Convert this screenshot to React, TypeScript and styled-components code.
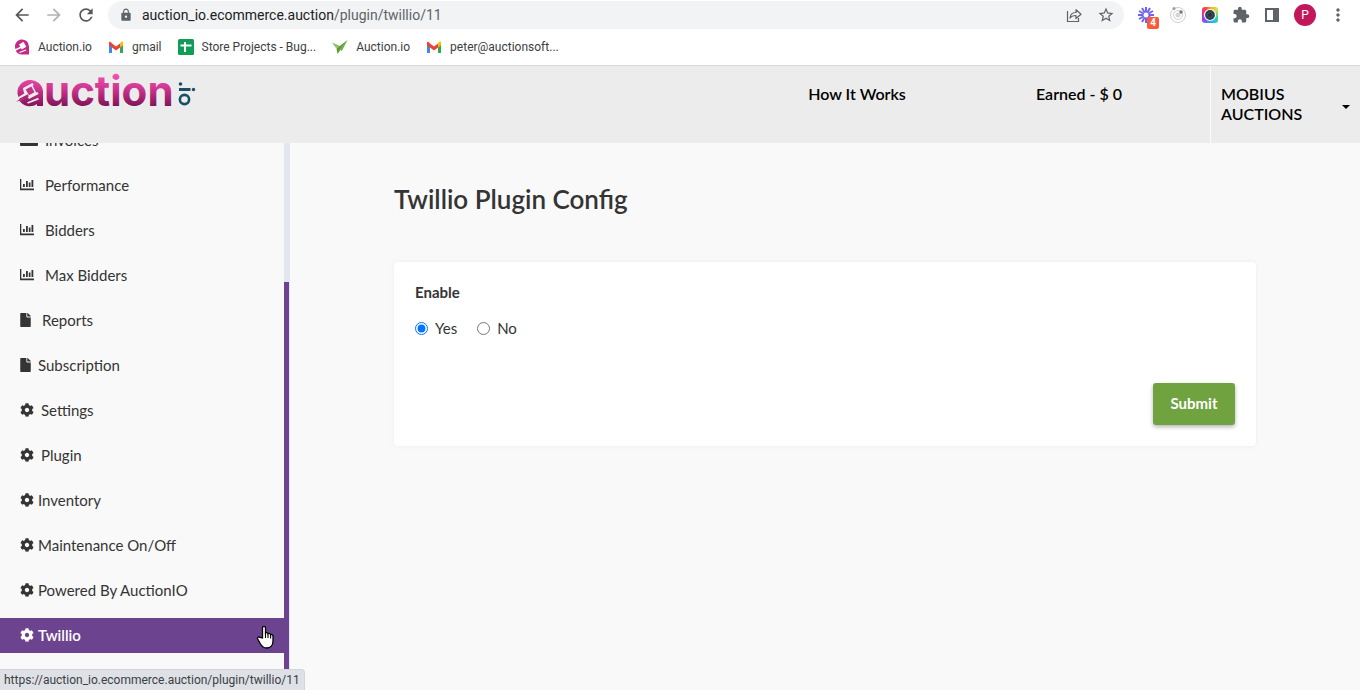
import React from "react";
import styled, { createGlobalStyle } from "styled-components";
import { FaCog, FaFile } from "react-icons/fa";
import {
  MdArrowBack,
  MdArrowForward,
  MdExtension,
  MdLock,
  MdMoreVert,
  MdRefresh,
  MdStarBorder,
} from "react-icons/md";

const GlobalStyle = createGlobalStyle`
  * { box-sizing: border-box; }
  body {
    margin: 0;
    background: #f9f9f9;
    color: #343434;
    font-family: Lato, "Liberation Sans", sans-serif;
    font-size: 15px;
  }
  a { color: inherit; text-decoration: none; }
  button { border: 0; background: none; padding: 0; font: inherit; color: inherit; cursor: pointer; }
  svg { display: block; flex: none; }
`;

const Screen = styled.div`
  display: flex;
  flex-direction: column;
  height: 100vh;
  overflow: hidden;
  position: relative;
`;

/* Browser chrome */

const Chrome = styled.div`
  background: #fff;
  border-bottom: 1px solid #d9dadc;
  font-family: Roboto, "Open Sans", sans-serif;
`;

const Toolbar = styled.div`
  display: flex;
  align-items: center;
  height: 30px;
  padding: 0 12px;
`;

const NavButtons = styled.div`
  display: flex;
  gap: 12px;
  width: 96px;
  color: #54575b;
`;

const IconButton = styled.button<{ $faded?: boolean }>`
  display: flex;
  align-items: center;
  justify-content: center;
  width: 20px;
  height: 24px;
  opacity: ${(p) => (p.$faded ? 0.45 : 1)};
`;

const AddressBar = styled.div`
  display: flex;
  align-items: center;
  flex: 1;
  height: 28px;
  padding: 0 8px 0 11px;
  border-radius: 14px;
  background: #f1f3f4;
  color: #5f6368;
`;

const AddressText = styled.div`
  flex: 1;
  margin-left: 9px;
  font-size: 14px;
  line-height: 20px;
  white-space: nowrap;
  span { color: #202124; }
`;

const AddressActions = styled.div`
  display: flex;
  gap: 12px;
`;

const Extensions = styled.div`
  display: flex;
  align-items: center;
  gap: 12px;
  margin-left: 12px;
  color: #5f6368;
`;

const BadgeHolder = styled.span`
  position: relative;
`;

const Badge = styled.span`
  position: absolute;
  left: 11px;
  top: 12px;
  width: 12px;
  height: 12px;
  border-radius: 2px;
  background: #fb5b3c;
  color: #fff;
  font-size: 10px;
  font-weight: 700;
  line-height: 12px;
  text-align: center;
`;

const Avatar = styled.span`
  width: 22px;
  height: 22px;
  border-radius: 50%;
  background: #c2185b;
  color: #fff;
  font-size: 12px;
  line-height: 22px;
  text-align: center;
`;

const Bookmarks = styled.nav`
  display: flex;
  align-items: center;
  gap: 16px;
  height: 35px;
  padding: 0 14px 2px;
  font-size: 12px;
  color: #3c4043;
`;

const Bookmark = styled.a`
  display: flex;
  align-items: center;
  gap: 8px;
  white-space: nowrap;
`;

/* Site header */

const Header = styled.header`
  display: flex;
  flex: none;
  height: 77px;
  background: #ececec;
  color: #000;
  font-size: 16px;
  font-weight: 600;
`;

const LogoLink = styled.a`
  margin: 0 auto 0 14px;
`;

const HeaderLink = styled.a`
  width: 222px;
  padding-top: 18px;
  line-height: 20px;
  text-align: center;
`;

const UserMenu = styled.button`
  display: flex;
  align-items: center;
  justify-content: space-between;
  width: 150px;
  margin-left: 20px;
  padding: 0 10px 2px;
  border-left: 1px solid #fafafa;
  line-height: 20px;
  text-align: left;
`;

const Caret = styled.span`
  border: 4px solid transparent;
  border-top-color: #000;
  border-bottom: 0;
  margin-top: 6px;
`;

/* Body */

const Body = styled.div`
  display: flex;
  flex: 1;
  min-height: 0;
`;

const Sidebar = styled.aside`
  display: flex;
  width: 290px;
  flex: none;
  overflow: hidden;
`;

const Menu = styled.nav`
  display: flex;
  flex: 1;
  flex-direction: column;
  gap: 10px;
  margin-top: -20px;
`;

const MenuItem = styled.a<{ $active?: boolean; $gap: number }>`
  display: flex;
  flex: none;
  align-items: center;
  gap: ${(p) => p.$gap}px;
  height: 35px;
  padding: 0 0 2px 20px;
  background: ${(p) => (p.$active ? "#6c438f" : "transparent")};
  color: ${(p) => (p.$active ? "#fff" : "#343434")};
  font-weight: ${(p) => (p.$active ? 600 : 400)};
`;

const PageIcon = styled(FaFile)`
  width: 11px;
  height: 14px;
`;

const ScrollTrack = styled.div`
  width: 6px;
  padding-top: 139px;
  background: #e2e6ef;
`;

const ScrollThumb = styled.div`
  width: 5px;
  height: 100%;
  background: #6c438f;
`;

const Main = styled.main`
  flex: 1;
  padding: 38px 104px;
`;

const Title = styled.h1`
  margin: 0 0 45px;
  font-size: 26px;
  font-weight: 600;
  line-height: 36px;
`;

const Card = styled.form`
  display: flex;
  flex-direction: column;
  height: 184px;
  padding: 20px 21px 21px;
  border-radius: 4px;
  background: #fff;
  box-shadow: 0 0 4px rgba(0, 0, 0, 0.06);
`;

const Options = styled.fieldset`
  display: flex;
  gap: 20px;
  margin: 0;
  padding: 0;
  border: 0;
`;

const Legend = styled.legend`
  padding: 0;
  margin-bottom: 16px;
  font-weight: 700;
  line-height: 20px;
`;

const Option = styled.label`
  display: flex;
  align-items: center;
  gap: 7px;
  line-height: 20px;
  input { width: 13px; height: 13px; margin: 0; }
`;

const Submit = styled.button`
  align-self: flex-end;
  width: 82px;
  height: 42px;
  margin-top: auto;
  padding-bottom: 2px;
  border-radius: 3px;
  background: #70a340;
  box-shadow: 0 2px 4px rgba(0, 0, 0, 0.3);
  color: #fff;
  font-weight: 700;
`;

/* Overlays */

const StatusBar = styled.div`
  position: absolute;
  left: 0;
  bottom: 0;
  height: 21px;
  padding: 0 4px 0 4px;
  border: 1px solid #d3d5d9;
  border-width: 1px 1px 0 0;
  border-radius: 0 4px 0 0;
  background: #dee1e6;
  color: #3c4043;
  font-family: Roboto, "Open Sans", sans-serif;
  font-size: 12px;
  line-height: 21px;
`;

const Pointer = styled.svg`
  position: absolute;
  left: 256px;
  top: 625px;
`;

const GavelMark = () => (
  <svg width="16" height="16" viewBox="0 0 16 16">
    <path d="M1.500 10A7 7 0 1 1 15 7.500V15.500H11C8 15.800 4 15.500 2.500 13Z" fill="#c22a83" />
    <path d="m5 5.500 4.500-2.700 2.800 5-4.500 2.700Z" fill="#fff" />
    <path d="m0 11.500 7-3.300" stroke="#fff" strokeWidth="1.500" />
    <path d="m5.500 13.500 6.500-2.500" stroke="#fff" strokeWidth="1.300" />
  </svg>
);

const GmailMark = () => (
  <svg width="16" height="16" viewBox="0 0 16 16">
    <path d="M1 4v10h3V6Z" fill="#4285f4" />
    <path d="M12 6v8h3V4Z" fill="#34a853" />
    <path d="M12 4.500v4l3-2.300V4c0-2-1.800-2-3 .500Z" fill="#fbbc04" />
    <path d="M1 4v2.200l3 2.300 4 3 4-3v-4L8 7.500 4 4.500C2.500 2.200 1 2.500 1 4Z" fill="#ea4335" />
  </svg>
);

const SheetMark = () => (
  <svg width="16" height="16" viewBox="0 0 16 16">
    <rect width="16" height="16" rx="1.500" fill="#0f9d58" />
    <path d="M7 3v10M2.500 6.500h11" stroke="#fff" strokeWidth="2" />
  </svg>
);

const DartMark = () => (
  <svg width="16" height="16" viewBox="0 0 16 16">
    <path d="M0 3.500 7 6.500l1 1.500-4 1Z" fill="#8cc069" />
    <path d="M15.500 1 4.500 9.500l1 5.500Z" fill="#5d9b2f" />
    <path d="M15.500 1 7.500 10.500l2.500 1.500Z" fill="#79b34e" />
  </svg>
);

const ShareIcon = () => (
  <svg width="18" height="18" viewBox="0 0 18 18" fill="none" stroke="currentColor" strokeWidth="1.200">
    <path d="M2.500 5v10.500h11V12" />
    <path d="M5 12c.4-4 2.500-5.500 6-5.500V3.700l5 4.500-5 4.300V9.500C8 9.500 6.500 10 5 12Z" strokeLinejoin="round" />
  </svg>
);

const BurstIcon = () => (
  <svg width="20" height="20" viewBox="0 0 20 20" stroke="#6e63ee" strokeWidth="2">
    {[0, 30, 60, 90, 120, 150, 180, 210, 240, 270, 300, 330].map((a) => (
      <path key={a} d="M10 7.500V2" transform={`rotate(${a} 10 10)`} />
    ))}
  </svg>
);

const OrbitIcon = () => (
  <svg width="20" height="20" viewBox="0 0 20 20" fill="none" stroke="#cfcfcf">
    <circle cx="10" cy="10" r="7.500" />
    <circle cx="10" cy="10" r="4.500" />
    <circle cx="10" cy="10" r="2" fill="#d8d8d8" />
    <circle cx="6" cy="3.500" r="1.500" fill="#999" stroke="none" />
    <circle cx="13" cy="7" r="1.700" fill="#777" stroke="none" />
  </svg>
);

const CameraBackdrop = styled.span`
  display: flex;
  align-items: center;
  justify-content: center;
  width: 16px;
  height: 16px;
  margin: 0 2px;
  border-radius: 3px;
  background: conic-gradient(#ffa51f, #d3e04c 50deg, #42d39a 110deg, #13c8ef 150deg, #4a8cf6 190deg, #9b3df1 240deg, #f02a9c 290deg, #fb4a35 330deg, #ffa51f);
`;

const CameraIcon = () => (
  <CameraBackdrop>
    <svg width="14" height="14" viewBox="0 0 14 14">
      <circle cx="7" cy="7" r="5.500" fill="#2d3d49" stroke="#fff" strokeWidth="1.200" />
      <circle cx="7" cy="7" r="2.500" fill="#22323d" stroke="#45565f" />
    </svg>
  </CameraBackdrop>
);

const PanelIcon = () => (
  <svg width="20" height="20" viewBox="0 0 20 20">
    <path d="M3 3h14v14H3Zm2 2v10h6V5Z" fill="currentColor" fillRule="evenodd" />
  </svg>
);

const ChartIcon = () => (
  <svg width="14" height="12" viewBox="0 0 14 12" fill="currentColor">
    <path d="M0 0h1.300v9.500H14v1.700H0ZM3 5h1.800v3H3ZM6 2h1.800v6H6ZM8.800 3.500h1.700V8H8.800ZM11.500 1h1.800v7h-1.800Z" />
  </svg>
);

const BillIcon = () => (
  <svg width="18" height="12" viewBox="0 0 18 12">
    <rect width="18" height="12" rx="1" fill="currentColor" />
    <circle cx="9" cy="5" r="2.500" fill="#f9f9f9" />
  </svg>
);

const Logo = () => (
  <svg width="184" height="56" viewBox="0 -5 184 56" role="img" aria-label="auction io">
    <defs>
      <linearGradient id="brand" gradientUnits="userSpaceOnUse" x1="0" y1="2" x2="0" y2="36">
        <stop offset="0" stopColor="#f655b3" />
        <stop offset="0.450" stopColor="#cf3690" />
        <stop offset="1" stopColor="#7d1255" />
      </linearGradient>
    </defs>
    <path d="M3.500 23A12.800 12.800 0 1 1 29 20.500V35H23V33C18 36.500 10 36 6 30.500Z" fill="url(#brand)" />
    <path d="m9 17 9.500-5 1.200 2-1 .8 3.500 6.600 1.300-.3 1 1.800-9.500 5.200-1.200-2 1-.9-1-2L2 29.500l-1.500-1 9.700-6-.9-3.300Z" fill="#ececec" />
    <path d="m11.700 18.500 5.600-3 3.200 5.800-5.500 3Z" fill="#c63089" />
    <path d="m2 30.500 8.500-4.500-1.500 3.500Z" fill="#bb2c80" />
    <path d="m13.500 32 11-4.300" stroke="#ececec" strokeWidth="1.800" />
    <text x="30" y="35" fontFamily="Inter, sans-serif" fontSize="42" fontWeight="700" fill="url(#brand)">
      uction
    </text>
    <g fill="#174f67">
      <circle cx="166.500" cy="13" r="1.800" />
      <rect x="165" y="17" width="11.500" height="3" />
      <circle cx="179.500" cy="18.500" r="1.700" />
      <circle cx="170.500" cy="28.500" r="4.600" fill="none" stroke="#174f67" strokeWidth="2.600" />
    </g>
  </svg>
);

const menu = [
  { label: "Invoices", icon: <BillIcon />, gap: 7 },
  { label: "Performance", icon: <ChartIcon />, gap: 11 },
  { label: "Bidders", icon: <ChartIcon />, gap: 11 },
  { label: "Max Bidders", icon: <ChartIcon />, gap: 11 },
  { label: "Reports", icon: <PageIcon />, gap: 11 },
  { label: "Subscription", icon: <PageIcon />, gap: 7 },
  { label: "Settings", icon: <FaCog size={14} />, gap: 7 },
  { label: "Plugin", icon: <FaCog size={14} />, gap: 7 },
  { label: "Inventory", icon: <FaCog size={14} />, gap: 4 },
  { label: "Maintenance On/Off", icon: <FaCog size={14} />, gap: 4 },
  { label: "Powered By AuctionIO", icon: <FaCog size={14} />, gap: 4 },
  { label: "Twillio", icon: <FaCog size={14} />, gap: 4, active: true },
];

export default function App() {
  return (
    <Screen>
      <GlobalStyle />
      <Chrome>
        <Toolbar>
          <NavButtons>
            <IconButton aria-label="Back"><MdArrowBack size={20} /></IconButton>
            <IconButton aria-label="Forward" $faded><MdArrowForward size={20} /></IconButton>
            <IconButton aria-label="Reload"><MdRefresh size={20} /></IconButton>
          </NavButtons>
          <AddressBar>
            <MdLock size={14} />
            <AddressText>
              <span>auction_io.ecommerce.auction</span>/plugin/twillio/11
            </AddressText>
            <AddressActions>
              <IconButton aria-label="Share"><ShareIcon /></IconButton>
              <IconButton aria-label="Bookmark"><MdStarBorder size={18} /></IconButton>
            </AddressActions>
          </AddressBar>
          <Extensions>
            <BadgeHolder><BurstIcon /><Badge>4</Badge></BadgeHolder>
            <OrbitIcon />
            <CameraIcon />
            <MdExtension size={18} />
            <PanelIcon />
            <Avatar>P</Avatar>
            <IconButton aria-label="More"><MdMoreVert size={20} /></IconButton>
          </Extensions>
        </Toolbar>
        <Bookmarks>
          <Bookmark href="#"><GavelMark />Auction.io</Bookmark>
          <Bookmark href="#"><GmailMark />gmail</Bookmark>
          <Bookmark href="#"><SheetMark />Store Projects - Bug...</Bookmark>
          <Bookmark href="#"><DartMark />Auction.io</Bookmark>
          <Bookmark href="#"><GmailMark />peter@auctionsoft...</Bookmark>
        </Bookmarks>
      </Chrome>
      <Header>
        <LogoLink href="#"><Logo /></LogoLink>
        <HeaderLink href="#">How It Works</HeaderLink>
        <HeaderLink href="#">Earned - $ 0</HeaderLink>
        <UserMenu>
          <span>MOBIUS<br />AUCTIONS</span>
          <Caret />
        </UserMenu>
      </Header>
      <Body>
        <Sidebar>
          <Menu>
            {menu.map((item) => (
              <MenuItem key={item.label} href="#" $gap={item.gap} $active={item.active}>
                {item.icon}
                {item.label}
              </MenuItem>
            ))}
          </Menu>
          <ScrollTrack><ScrollThumb /></ScrollTrack>
        </Sidebar>
        <Main>
          <Title>Twillio Plugin Config</Title>
          <Card onSubmit={(e) => e.preventDefault()}>
            <Options>
              <Legend>Enable</Legend>
              <Option><input type="radio" name="enable" defaultChecked />Yes</Option>
              <Option><input type="radio" name="enable" />No</Option>
            </Options>
            <Submit type="submit">Submit</Submit>
          </Card>
        </Main>
      </Body>
      <StatusBar>https://auction_io.ecommerce.auction/plugin/twillio/11</StatusBar>
      <Pointer width="20" height="24" viewBox="0 0 20 24">
        <path
          d="M6.500 13V3c0-2.300 3-2.300 3 0v5c1-.8 2.300-.3 2.500.8 1-.7 2.400-.2 2.600.9 1.200-.5 2.400.2 2.400 1.600V16c0 4-2.500 7-6.500 7-3 0-4.500-1.500-6-4l-2.700-4.800c-1-1.800 1-3 2.300-1.700Z"
          fill="#fff"
          stroke="#000"
          strokeWidth="1.300"
        />
        <path d="M9.500 8v5M12 9v4M14.600 10v3.500" stroke="#000" strokeWidth="1.100" />
      </Pointer>
    </Screen>
  );
}
